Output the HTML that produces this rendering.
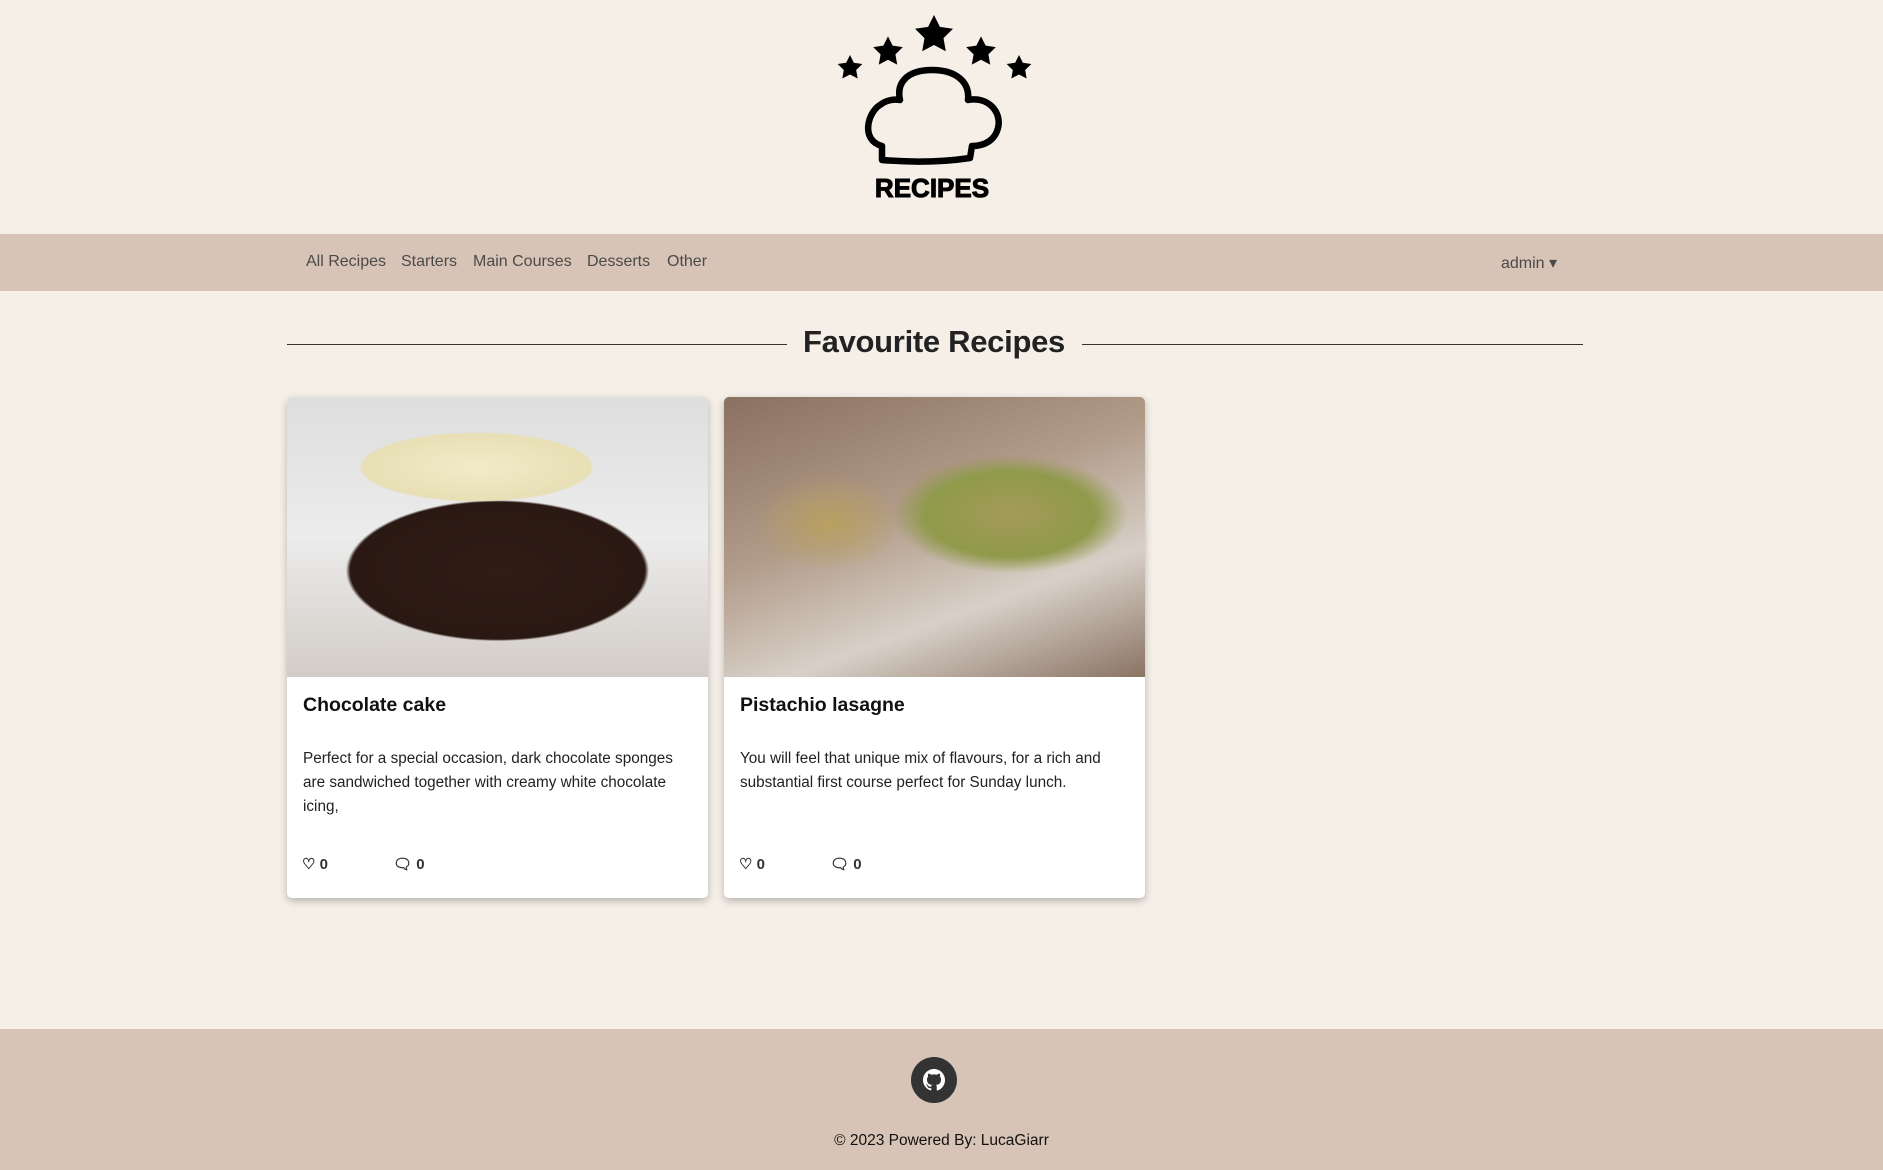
<!DOCTYPE html>
<html><head><meta charset="utf-8"><style>
*{margin:0;padding:0;box-sizing:border-box}
body{width:1883px;height:1170px;background:#f5efe8;font-family:"Liberation Sans",sans-serif;color:#212529;position:relative;overflow:hidden}
.nav{position:absolute;top:234px;left:0;width:1883px;height:57px;background:#d8c4b6}
.nav span{position:absolute;top:19px;font-size:16px;color:#4a4a4a}
h1{position:absolute;top:324px;left:0;width:1868px;text-align:center;font-size:31px;font-weight:bold;color:#222;letter-spacing:-0.3px}
.line{position:absolute;top:344px;height:1px;background:#333}
.card{position:absolute;top:397px;width:421px;height:501px;background:#fff;border-radius:5px;box-shadow:0 3px 8px rgba(0,0,0,.25);overflow:hidden}
.img{height:280px}
.card h3{position:absolute;left:16px;font-size:19.5px;top:297px;color:#111}
.card p{position:absolute;top:350px;left:16px;right:14px;font-size:15.3px;line-height:24px;color:#222}
.ic{position:absolute;top:458px;font-size:15px;color:#333;display:flex;align-items:center;gap:4px;font-weight:bold}
.foot{position:absolute;top:1029px;left:0;width:1883px;height:141px;background:#d8c4b6}
</style></head><body>
<svg style="position:absolute;left:820px;top:0" width="240" height="205" viewBox="0 0 240 205">
<g fill="#000">
<polygon points="0,-20 5.9,-8.1 19,-6.2 9.5,3.1 11.8,16.2 0,10 -11.8,16.2 -9.5,3.1 -19,-6.2 -5.9,-8.1" transform="translate(114,35)"/>
<polygon points="0,-20 5.9,-8.1 19,-6.2 9.5,3.1 11.8,16.2 0,10 -11.8,16.2 -9.5,3.1 -19,-6.2 -5.9,-8.1" transform="translate(68,52) scale(.78)"/>
<polygon points="0,-20 5.9,-8.1 19,-6.2 9.5,3.1 11.8,16.2 0,10 -11.8,16.2 -9.5,3.1 -19,-6.2 -5.9,-8.1" transform="translate(161,52) scale(.78)"/>
<polygon points="0,-20 5.9,-8.1 19,-6.2 9.5,3.1 11.8,16.2 0,10 -11.8,16.2 -9.5,3.1 -19,-6.2 -5.9,-8.1" transform="translate(30,68) scale(.65)"/>
<polygon points="0,-20 5.9,-8.1 19,-6.2 9.5,3.1 11.8,16.2 0,10 -11.8,16.2 -9.5,3.1 -19,-6.2 -5.9,-8.1" transform="translate(199,68) scale(.65)"/>
</g>
<path d="M62,160 L62,146 C40,140 48,112 60,105 C66,100 74,99 80,100 C76,82 88,70 112,70 C136,70 150,82 148,100 C168,96 182,112 178,128 C175,140 165,146 152,146 L150,158 Q110,164 62,160 Z" fill="none" stroke="#000" stroke-width="6.5" stroke-linejoin="round"/>
<text x="112" y="197" text-anchor="middle" font-family="Liberation Sans" font-weight="bold" font-size="26" fill="#000" stroke="#000" stroke-width="1">RECIPES</text>
</svg>
<div class="nav">
<span style="left:306px">All Recipes</span><span style="left:401px">Starters</span><span style="left:473px">Main Courses</span><span style="left:587px">Desserts</span><span style="left:667px">Other</span>
<span style="left:1501px">admin ▾</span>
</div>
<h1>Favourite Recipes</h1>
<div class="line" style="left:287px;width:500px"></div>
<div class="line" style="left:1082px;width:501px"></div>
<div class="card" style="left:287px">
<div class="img" style="background:radial-gradient(ellipse 45% 20% at 45% 25%,#f2ebc8 0,#e8dfb5 60%,transparent 62%),radial-gradient(ellipse 50% 35% at 50% 62%,#2f1c15 0,#2a1812 70%,transparent 72%),linear-gradient(#dedede,#ececec 50%,#d2ccc6)"></div>
<h3>Chocolate cake</h3>
<p>Perfect for a special occasion, dark chocolate sponges are sandwiched together with creamy white chocolate icing,</p>
<div class="ic" style="left:15px">♡ 0</div><div class="ic" style="left:106px">🗨︎ 0</div>
</div>
<div class="card" style="left:724px">
<div class="img" style="background:radial-gradient(ellipse 40% 30% at 68% 42%,#a59a5a 0,#8f9a4a 50%,transparent 70%),radial-gradient(ellipse 25% 25% at 25% 45%,#b8a060 0,transparent 70%),linear-gradient(160deg,#8a7060,#b09a88 40%,#d8d0c8 70%,#8a7464)"></div>
<h3>Pistachio lasagne</h3>
<p>You will feel that unique mix of flavours, for a rich and substantial first course perfect for Sunday lunch.</p>
<div class="ic" style="left:15px">♡ 0</div><div class="ic" style="left:106px">🗨︎ 0</div>
</div>
<div class="foot">
<div style="position:absolute;left:911px;top:28px;width:46px;height:46px;border-radius:50%;background:#333">
<svg width="22" height="22" viewBox="0 0 16 16" style="position:absolute;left:12px;top:12px"><path fill="#fff" d="M8 0C3.58 0 0 3.58 0 8c0 3.54 2.29 6.530 5.47 7.59.4.07.55-.17.55-.38v-1.33c-2.23.48-2.7-1.07-2.7-1.07-.36-.92-.89-1.17-.89-1.17-.73-.5.06-.49.06-.49.8.06 1.230.83 1.23.83.71 1.22 1.87.87 2.33.66.07-.52.28-.87.5-1.070-1.78-.2-3.64-.89-3.64-3.95 0-.87.31-1.59.82-2.15-.08-.2-.36-1.02.08-2.12 0 0 .67-.21 2.2.82a7.6 7.6 0 0 1 4 0c1.53-1.04 2.2-.82 2.2-.82.44 1.1.16 1.92.08 2.12.51.56.82 1.27.82 2.15 0 3.07-1.87 3.75-3.65 3.95.29.25.54.73.54 1.48v2.2c0 .21.15.46.55.38A8 8 0 0 0 16 8c0-4.42-3.58-8-8-8z"/></svg>
</div>
<div style="position:absolute;top:103px;width:100%;text-align:center;font-size:15.5px;color:#111">© 2023 Powered By: LucaGiarr</div>
</div>
</body></html>
